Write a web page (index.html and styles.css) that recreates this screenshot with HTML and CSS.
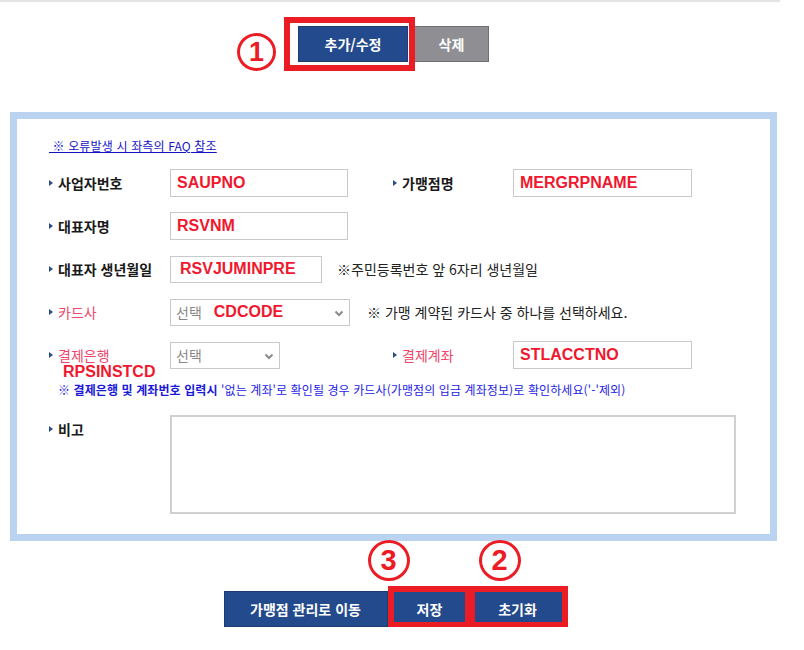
FILE: index.html
```html
<!DOCTYPE html>
<html lang="ko">
<head>
<meta charset="utf-8">
<title>가맹점 등록</title>
<link rel="stylesheet" href="styles.css">
</head>
<body>
<div class="wrap">
  <div class="topline"></div>

  <div class="btnbar top">
    <span class="mark">
      <button class="btn blue b-edit">추가/수정</button>
      <span class="redbox rb-edit"></span>
      <span class="circle c-one">1</span>
    </span>
    <button class="btn gray b-del">삭제</button>
  </div>

  <div class="panel">
    <div class="faq"><a href="#">&nbsp;※ 오류발생 시 좌측의 FAQ 참조</a></div>

    <div class="row">
      <div class="lbl">사업자번호</div>
      <div class="cell"><div class="field f178"><span class="val">SAUPNO</span></div></div>
      <div class="lbl lbl-r">가맹점명</div>
      <div class="field f179"><span class="val">MERGRPNAME</span></div>
    </div>

    <div class="row">
      <div class="lbl">대표자명</div>
      <div class="cell"><div class="field f178"><span class="val">RSVNM</span></div></div>
    </div>

    <div class="row">
      <div class="lbl">대표자 생년월일</div>
      <div class="field f152"><span class="val v-pad">RSVJUMINPRE</span></div>
      <div class="note n-birth">※주민등록번호 앞 6자리 생년월일</div>
    </div>

    <div class="row">
      <div class="lbl pink">카드사</div>
      <div class="field sel f180">
        <span class="ph">선택</span><span class="val v-cd">CDCODE</span>
        <svg class="chev" width="10" height="7" viewBox="0 0 10 7"><path d="M1.5 1.5 L5 5 L8.5 1.5" fill="none" stroke="#8a8a8a" stroke-width="2"/></svg>
      </div>
      <div class="note n-card">※ 가맹 계약된 카드사 중 하나를 선택하세요.</div>
    </div>

    <div class="row">
      <div class="lbl pink lbl-bank">결제은행<span class="tag">RPSINSTCD</span></div>
      <div class="cell">
        <div class="field sel f110">
          <span class="ph">선택</span>
          <svg class="chev" width="10" height="7" viewBox="0 0 10 7"><path d="M1.5 1.5 L5 5 L8.5 1.5" fill="none" stroke="#8a8a8a" stroke-width="2"/></svg>
        </div>
      </div>
      <div class="lbl lbl-r pink">결제계좌</div>
      <div class="field f179"><span class="val">STLACCTNO</span></div>
    </div>

    <div class="bluenote"><b>※ 결제은행 및 계좌번호 입력시</b> '없는 계좌'로 확인될 경우 카드사(가맹점의 입금 계좌정보)로 확인하세요('-'제외)</div>

    <div class="row row-memo">
      <div class="lbl">비고</div>
      <textarea class="memo"></textarea>
    </div>
  </div>

  <div class="btnbar bottom">
    <button class="btn blue b-move">가맹점 관리로 이동</button>
    <span class="mark">
      <button class="btn blue b-save">저장</button>
      <span class="redbox rb-save"></span>
      <span class="circle c-three">3</span>
    </span>
    <span class="mark">
      <button class="btn blue b-reset">초기화</button>
      <span class="redbox rb-reset"></span>
      <span class="circle c-two">2</span>
    </span>
  </div>
</div>
</body>
</html>
```

FILE: styles.css
```css
* { box-sizing: border-box; }

body {
  margin: 0;
  background: #fff;
  color: #111;
  font-family: "Noto Sans CJK KR", "Noto Sans", sans-serif;
}

.wrap { width: 787px; }

.topline { height: 2px; width: 780px; background: #e4e4e4; }

/* button bars */
.btnbar { display: flex; justify-content: center; }
.btnbar.top { margin-top: 24px; gap: 6px; }
.btnbar.bottom { margin-top: 50px; gap: 4px; }

.btn {
  height: 36px;
  padding: 0;
  border: 1px solid;
  color: #fff;
  font-family: "Noto Sans CJK KR", sans-serif;
  font-weight: 700;
  font-size: 14px;
  line-height: 34px;
  cursor: pointer;
}
.btn.blue { background: #234a8c; border-color: #1b3c74; }
.btn.gray { background: #8f8f93; border-color: #6f6f73; }
.b-edit { width: 110px; }
.b-del { width: 75px; }
.b-move { width: 164px; }
.b-save { width: 76px; }
.b-reset { width: 92px; }

.mark { position: relative; display: block; }

.redbox {
  position: absolute;
  border: 6px solid #ec1c24;
  pointer-events: none;
}
.rb-edit { top: -9px; bottom: -9px; left: -14px; right: -7px; }
.rb-save { top: -5px; bottom: -1px; left: -4px; right: -3px; }
.rb-reset { top: -5px; bottom: -1px; left: -3px; right: -4px; }

.circle {
  position: absolute;
  width: 42px;
  height: 41px;
  border: 3px solid #ec1c24;
  border-radius: 50%;
  color: #ec1c24;
  font: 700 29px/35px "Liberation Sans", sans-serif;
  text-align: center;
}
.c-one { left: -61px; top: 7px; width: 39px; height: 38px; line-height: 32px; font-size: 27px; }
.c-three { left: -24px; top: -51px; }
.c-two { left: 7px; top: -51px; }

/* panel */
.panel {
  margin: 50px 10px 0;
  border: 7px solid #b9d3f0;
  padding: 19px 34px 20px 32px;
}

.faq { font-size: 12px; line-height: 16px; height: 16px; letter-spacing: 0.15px; }
.faq a { color: #1414c4; text-decoration: underline; }

.row {
  display: flex;
  align-items: center;
  height: 28px;
  margin-top: 15px;
}

.lbl {
  position: relative;
  width: 121px;
  padding-left: 9px;
  font-size: 14px;
  line-height: 20px;
  font-weight: 700;
  color: #1a1a1a;
  flex: none;
  white-space: nowrap;
}
.lbl::before {
  content: "";
  position: absolute;
  left: 0;
  top: 7px;
  border-left: 4px solid #2b4c84;
  border-top: 3.5px solid transparent;
  border-bottom: 3.5px solid transparent;
}
.lbl.pink { color: #f0466c; font-weight: 400; }
.lbl-r { margin-left: 45px; width: 120px; }

.cell { width: 178px; flex: none; }

.field {
  display: flex;
  align-items: center;
  height: 28px;
  border: 1px solid #c9c9c9;
  padding-left: 6px;
  background: #fff;
  flex: none;
}
.f178 { width: 178px; }
.f179 { width: 179px; }
.f152 { width: 152px; height: 27px; }
.f180 { width: 180px; height: 27px; }
.f110 { width: 110px; height: 27px; }

.val {
  font: 700 16px/20px "Liberation Sans", Arial, sans-serif;
  color: #f0172e;
}
.v-pad { padding-left: 3px; }
.v-cd { margin-left: 12px; }

.sel { position: relative; padding-left: 5px; }
.ph { font-size: 14px; line-height: 20px; color: #888; }
.chev { position: absolute; right: 5px; top: 10px; }

.note { font-size: 14px; line-height: 20px; color: #222; white-space: nowrap; }
.n-birth { margin-left: 15px; }
.n-card { margin-left: 17px; }

.lbl-bank .tag {
  position: absolute;
  left: 14px;
  top: 18px;
  font: 700 16px/18px "Liberation Sans", Arial, sans-serif;
  color: #f0172e;
  white-space: nowrap;
}

.bluenote {
  margin-top: 13px;
  padding-left: 9px;
  font-size: 12px;
  line-height: 16px;
  letter-spacing: 0.1px;
  color: #2323e6;
  white-space: nowrap;
}
.bluenote b { color: #1a1ad8; }

.row-memo {
  align-items: flex-start;
  height: auto;
  margin-top: 17px;
}
.row-memo .lbl { margin-top: 4px; }

.memo {
  width: 566px;
  height: 99px;
  border: 2px solid #d0d0d0;
  resize: none;
  display: block;
  font: inherit;
}
```
